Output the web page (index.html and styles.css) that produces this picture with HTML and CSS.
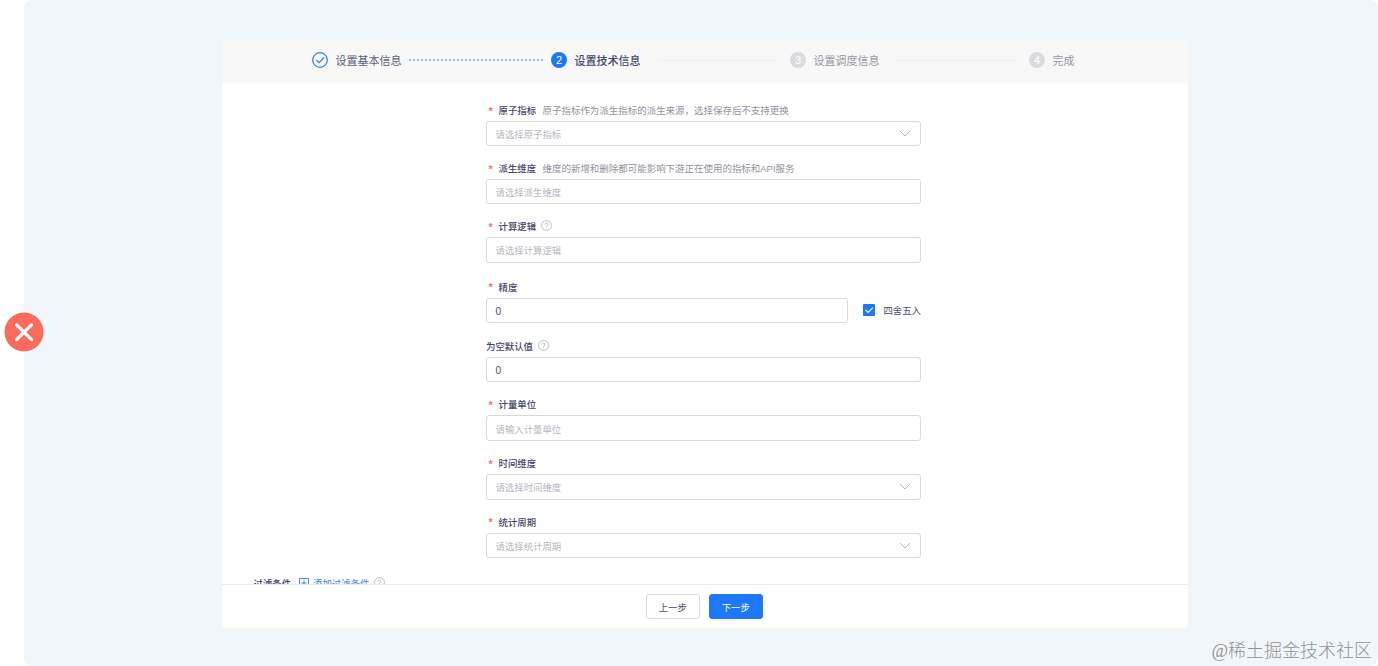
FILE: index.html
```html
<!DOCTYPE html>
<html lang="zh-CN">
  <head>
    <meta charset="UTF-8" />
    <meta name="viewport" content="width=device-width, initial-scale=1.0" />
    <title>设置技术信息</title>
    <link rel="stylesheet" href="styles.css">
  </head>
  <body>
    <div class="canvas">
      <div class="panel">
        <div class="steps">
          <div class="step done">
            <svg class="step-icon" viewBox="0 0 16 16">
              <circle cx="8" cy="8" r="7.3" />
              <path d="M4.3 8l2.8 2.7 5-5.2" />
            </svg>
            <span class="step-title">设置基本信息</span>
            <span class="step-line"></span>
          </div>
          <div class="step active">
            <span class="step-num">2</span>
            <span class="step-title">设置技术信息</span>
            <span class="step-line"></span>
          </div>
          <div class="step">
            <span class="step-num">3</span>
            <span class="step-title">设置调度信息</span>
            <span class="step-line"></span>
          </div>
          <div class="step last">
            <span class="step-num">4</span>
            <span class="step-title">完成</span>
          </div>
        </div>

        <div class="content">
          <div class="form">
            <div class="field compact">
              <div class="label"><i>*</i><b>原子指标</b><span class="hint">原子指标作为派生指标的派生来源，选择保存后不支持更换</span></div>
              <div class="box placeholder">
                <span>请选择原子指标</span>
                <svg class="arrow" viewBox="0 0 12 8"><path d="M1 1l5 5 5-5" /></svg>
              </div>
            </div>

            <div class="field compact">
              <div class="label"><i>*</i><b>派生维度</b><span class="hint">维度的新增和删除都可能影响下游正在使用的指标和API服务</span></div>
              <div class="box placeholder"><span>请选择派生维度</span></div>
            </div>

            <div class="field wide">
              <div class="label">
                <i>*</i><b>计算逻辑</b>
                <svg class="help" viewBox="0 0 11 11"><circle cx="5.5" cy="5.5" r="4.9" /><path d="M4 4.5a1.5 1.5 0 1 1 2.2 1.3q-.7.35-.7 1M5.5 7.6v.8" /></svg>
              </div>
              <div class="box placeholder"><span>请选择计算逻辑</span></div>
            </div>

            <div class="field">
              <div class="label"><i>*</i><b>精度</b></div>
              <div class="row">
                <div class="box value"><span>0</span></div>
                <div class="check">
                  <svg viewBox="0 0 12 12"><rect width="12" height="12" rx="1" /><path d="M2.4 5.8l2.7 2.7 4.7-4.9" /></svg>
                  <span>四舍五入</span>
                </div>
              </div>
            </div>

            <div class="field">
              <div class="label">
                <b>为空默认值</b>
                <svg class="help" viewBox="0 0 11 11"><circle cx="5.5" cy="5.5" r="4.9" /><path d="M4 4.5a1.5 1.5 0 1 1 2.2 1.3q-.7.35-.7 1M5.5 7.6v.8" /></svg>
              </div>
              <div class="box value"><span>0</span></div>
            </div>

            <div class="field">
              <div class="label"><i>*</i><b>计量单位</b></div>
              <div class="box placeholder"><span>请输入计量单位</span></div>
            </div>

            <div class="field">
              <div class="label"><i>*</i><b>时间维度</b></div>
              <div class="box placeholder">
                <span>请选择时间维度</span>
                <svg class="arrow" viewBox="0 0 12 8"><path d="M1 1l5 5 5-5" /></svg>
              </div>
            </div>

            <div class="field">
              <div class="label"><i>*</i><b>统计周期</b></div>
              <div class="box placeholder">
                <span>请选择统计周期</span>
                <svg class="arrow" viewBox="0 0 12 8"><path d="M1 1l5 5 5-5" /></svg>
              </div>
            </div>
          </div>

          <div class="filter">
            <b>过滤条件</b>
            <svg class="plus" viewBox="0 0 10 10"><path d="M.5.5h9v9h-9zM5 2.5v5M2.5 5h5" /></svg>
            <span class="add">添加过滤条件</span>
            <svg class="help" viewBox="0 0 11 11"><circle cx="5.5" cy="5.5" r="4.9" /><path d="M4 4.5a1.5 1.5 0 1 1 2.2 1.3q-.7.35-.7 1M5.5 7.6v.8" /></svg>
          </div>
        </div>

        <div class="footer">
          <div class="btn">上一步</div>
          <div class="btn primary">下一步</div>
        </div>
      </div>
    </div>

    <svg class="close" viewBox="0 0 40 40">
      <circle cx="20" cy="20" r="19.5" />
      <path d="M12.7 12.9l14.8 14.8M27.5 12.9L12.7 27.7" />
    </svg>
    <div class="watermark">@稀土掘金技术社区</div>
  </body>
</html>
```
FILE: styles.css
```css
body {
  margin: 0;
  background: #fff;
  font-family: "Liberation Sans", "Noto Sans CJK SC", sans-serif;
  font-size: 9.4px;
  color: #4c4d6c;
  overflow: hidden;
}
.canvas {
  box-sizing: border-box;
  height: 666px;
  margin-left: 24px;
  padding: 40px 190.5px 38px 198px;
  background: #f0f6fa;
  border-radius: 8px;
}
.panel {
  display: flex;
  flex-direction: column;
  height: 588px;
  background: #fff;
  border-radius: 4px;
  overflow: hidden;
}

/* steps */
.steps {
  display: flex;
  box-sizing: border-box;
  height: 43px;
  flex-shrink: 0;
  padding: 0 0 3px 90px;
  background: #f8f8f8;
}
.step {
  display: flex;
  align-items: center;
  flex-shrink: 0;
  width: 239px;
  font-size: 11px;
  color: #96979f;
}
.step.last {
  width: auto;
}
.step.done {
  color: #5d5e7b;
}
.step.active {
  color: #45456a;
}
.step-icon {
  width: 16px;
  height: 16px;
  fill: none;
  stroke: #3482f7;
  stroke-width: 1.3;
}
.step-num {
  width: 16px;
  height: 16px;
  line-height: 17px;
  border-radius: 50%;
  background: #dadbdf;
  color: #fff;
  text-align: center;
}
.active .step-num {
  background: #1f78fc;
}
.step-title {
  margin-left: 7.5px;
  line-height: 16px;
  padding-top: 2px;
}
.active .step-title {
  font-weight: 500;
}
.step-line {
  flex: 1;
  height: 1px;
  margin: 0 12px 0 16px;
  background: #f1f1f2;
}
.done .step-line {
  height: 2px;
  margin: 0 8px 0 7.5px;
  background: repeating-linear-gradient(90deg, #8dbbed 0 2.5px, transparent 2.5px 4px);
}

/* form */
.content {
  flex: 1;
  min-height: 0;
  overflow: hidden;
}
.form {
  width: 435px;
  margin: 0 0 0 264px;
  padding-top: 18.2px;
}
.field {
  margin-bottom: 13.25px;
}
.field.compact {
  margin-bottom: 13px;
}
.field.wide {
  margin-bottom: 15.3px;
}
.label {
  display: flex;
  align-items: center;
  box-sizing: border-box;
  height: 20px;
  padding-bottom: 2px;
}
.label i {
  width: 10px;
  padding-left: 2.5px;
  font-style: normal;
  font-size: 11px;
  font-weight: bold;
  line-height: 14px;
  padding-top: 1px;
  color: #f07a6e;
}
.label b,
.filter b {
  font-weight: 500;
  color: #45456a;
}
.hint {
  margin-left: 6.5px;
  font-size: 9.48px;
  color: #92939d;
}
.help {
  width: 11px;
  height: 11px;
  margin-left: 5px;
  margin-bottom: 1px;
  fill: none;
  stroke: #adaeb4;
  stroke-width: 0.8;
}
.box {
  display: flex;
  align-items: center;
  justify-content: space-between;
  box-sizing: border-box;
  height: 25.5px;
  padding: 1px 9px 0 8.5px;
  border: 1px solid #d9dade;
  border-radius: 3px;
}
.compact .box {
  height: 25px;
}
.placeholder {
  color: #b6b7bf;
}
.value {
  padding-top: 2px;
  font-size: 10px;
}
.arrow {
  width: 12px;
  height: 8px;
  margin-bottom: 1px;
  fill: none;
  stroke: #b9bac0;
  stroke-width: 1;
}
.row {
  display: flex;
  align-items: center;
  justify-content: space-between;
}
.row .box {
  width: 362px;
}
.check {
  display: flex;
  align-items: center;
  gap: 8px;
  padding-bottom: 1px;
}
.check svg {
  width: 12px;
  height: 12px;
  fill: #1f78fc;
}
.check path {
  fill: none;
  stroke: #fff;
  stroke-width: 1.1;
}
.filter {
  display: flex;
  align-items: center;
  height: 16px;
  margin-left: 31.5px;
  padding-top: 3.5px;
}
.plus {
  width: 10px;
  height: 10px;
  margin: 0 4px 0 8px;
  fill: none;
  stroke: #4387e8;
}
.add {
  color: #3482f7;
}

/* footer */
.footer {
  display: flex;
  justify-content: center;
  gap: 9px;
  box-sizing: border-box;
  height: 44px;
  flex-shrink: 0;
  padding: 9px 1px 0 0;
  border-top: 1px solid #e9eaec;
}
.btn {
  box-sizing: border-box;
  width: 54px;
  height: 25px;
  line-height: 25px;
  border: 1px solid #d9dade;
  border-radius: 3px;
  text-align: center;
}
.btn.primary {
  border-color: #1f78fc;
  background: #1f78fc;
  color: #fff;
}

.close {
  position: absolute;
  left: 4px;
  top: 312px;
  width: 40px;
  height: 40px;
  fill: #fa6c5c;
  stroke: none;
}
.close path {
  stroke: #fff;
  stroke-width: 3.3;
  stroke-linecap: round;
}
.watermark {
  position: absolute;
  right: 6px;
  bottom: 4px;
  font-family: "Liberation Serif", "Noto Sans CJK SC", serif;
  font-size: 18px;
  font-weight: 300;
  color: #8f9396;
}
```
